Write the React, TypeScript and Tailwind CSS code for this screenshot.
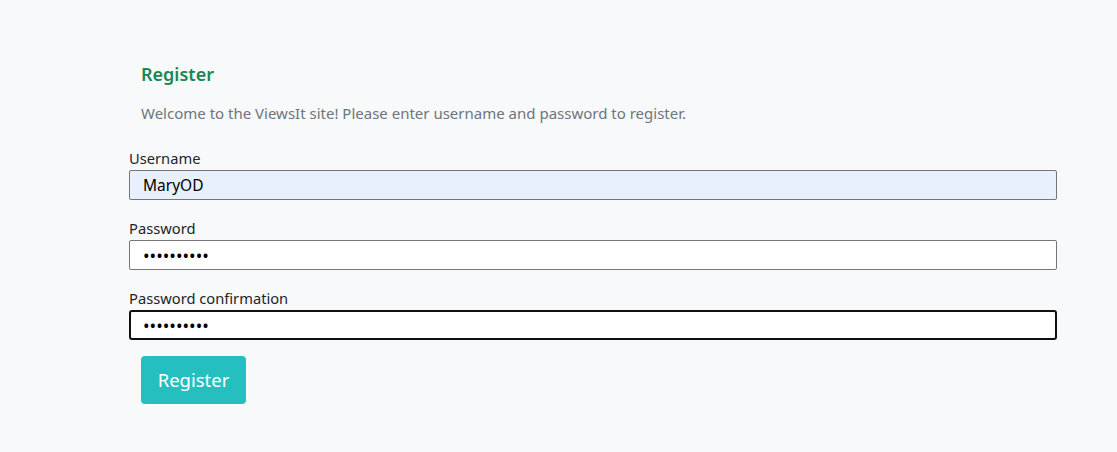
import React from "react";

export default function App() {
  const font = { fontFamily: '"Noto Sans", "Open Sans", sans-serif' };
  return (
    <div className="w-[1117px] h-[452px] bg-[#f8f9fa] overflow-hidden" style={font}>
      <div className="pl-[129px] pr-[60px] pt-[60px] w-[1117px]">
        <div className="px-3">
          <h1 className="text-[18px] leading-[28px] font-semibold text-[#198754]">Register</h1>
          <p className="mt-[14px] text-[15px] leading-[22px] text-[#6c757d]">
            Welcome to the ViewsIt site! Please enter username and password to register.
          </p>
        </div>
        <form className="mt-[24px] w-[928px] flex flex-col">
          <label className="text-[14.7px] leading-[20px] text-[#212529]">Username</label>
          <input
            readOnly
            value="MaryOD"
            className="mt-[2px] h-[30px] w-full bg-[#e8f0fe] border border-[#767676] rounded-[2px] px-[13px] text-[15.5px] text-black outline-none"
          />
          <label className="mt-[18px] text-[14.7px] leading-[20px] text-[#212529]">Password</label>
          <input
            readOnly
            type="password"
            value="abcdefghij"
            className="mt-[2px] h-[30px] w-full bg-white border border-[#767676] rounded-[2px] px-[13px] text-[17.5px] text-black outline-none"
          />
          <label className="mt-[18px] text-[14.7px] leading-[20px] text-[#212529]">Password confirmation</label>
          <input
            readOnly
            type="password"
            value="abcdefghij"
            className="mt-[2px] h-[30px] w-full bg-white border-2 border-[#101010] rounded-[3px] px-[12px] text-[17.5px] text-black outline-none"
          />
          <div className="px-3 mt-[16px]">
            <button
              type="button"
              className="w-[105px] h-[48px] rounded-[4px] bg-[#25bfbf] text-white text-[18.5px]"
            >
              Register
            </button>
          </div>
        </form>
      </div>
    </div>
  );
}
